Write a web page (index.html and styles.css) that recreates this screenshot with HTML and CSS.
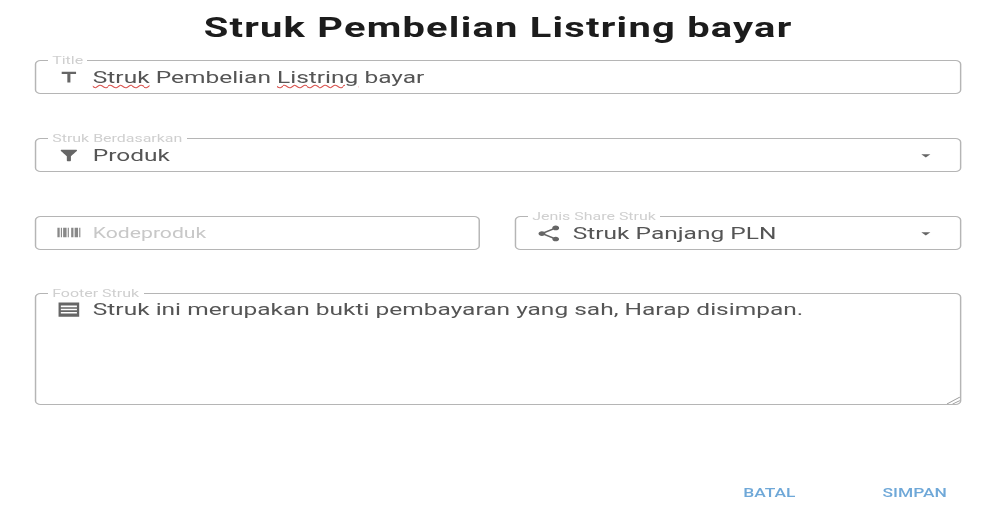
FILE: index.html
```html
<!DOCTYPE html>
<html lang="en">
<head>
  <meta charset="UTF-8" />
  <meta name="viewport" content="width=device-width, initial-scale=1.0"/>
  <title>Struk Pembelian Listring bayar</title>
  <link rel="stylesheet" href="styles.css">
</head>
<body>
  <div class="page">
    <h1 class="page-title">Struk Pembelian Listring bayar</h1>

    <fieldset class="field">
      <legend>Title</legend>
      <svg class="icon" viewBox="0 0 24 24"><path d="M5 4v3h5.5v12h3V7H19V4z"/></svg>
      <div class="value"><span class="typo">Struk</span> Pembelian <span class="typo">Listring</span> bayar</div>
    </fieldset>

    <fieldset class="field">
      <legend>Struk Berdasarkan</legend>
      <svg class="icon" viewBox="0 0 24 24"><path d="M4.25 5.61C6.27 8.2 10 13 10 13v6c0 .55.45 1 1 1h2c.55 0 1-.45 1-1v-6s3.72-4.8 5.74-7.39c.51-.66.04-1.61-.79-1.61H5.04c-.83 0-1.3.95-.79 1.61z"/></svg>
      <div class="value">Produk</div>
      <svg class="caret" viewBox="0 0 24 24"><path d="M7 10l5 5 5-5z"/></svg>
    </fieldset>

    <div class="field-row">
      <fieldset class="field plain">
        <svg class="icon wide" viewBox="0 0 24 24"><path d="M2 6h2v12H2zm3 0h1v12H5zm2 0h3v12H7zm4 0h1v12h-1zm3 0h2v12h-2zm3 0h3v12h-3zm4 0h1v12h-1z"/></svg>
        <div class="value placeholder">Kodeproduk</div>
      </fieldset>
      <fieldset class="field">
        <legend>Jenis Share Struk</legend>
        <svg class="icon wide" viewBox="0 0 24 24"><path d="M18 16.08c-.76 0-1.44.3-1.96.77L8.91 12.7c.05-.23.09-.46.09-.7s-.04-.47-.09-.7l7.05-4.11c.54.5 1.25.81 2.04.81 1.66 0 3-1.34 3-3s-1.34-3-3-3-3 1.34-3 3c0 .24.04.47.09.7L8.04 9.81C7.5 9.31 6.79 9 6 9c-1.66 0-3 1.34-3 3s1.34 3 3 3c.79 0 1.5-.31 2.04-.81l7.12 4.16c-.05.21-.08.43-.08.65 0 1.61 1.31 2.92 2.92 2.92 1.61 0 2.92-1.31 2.92-2.92s-1.31-2.92-2.92-2.92z"/></svg>
        <div class="value">Struk Panjang PLN</div>
        <svg class="caret" viewBox="0 0 24 24"><path d="M7 10l5 5 5-5z"/></svg>
      </fieldset>
    </div>

    <fieldset class="field footer-field">
      <legend>Footer Struk</legend>
      <svg class="icon wide" viewBox="0 0 24 24"><path fill-rule="evenodd" d="M3 3h18v18H3zM5 7v2h14V7zM5 11v2h14v-2zM5 15v2h14v-2z"/></svg>
      <div class="value">Struk ini merupakan bukti pembayaran yang sah, Harap disimpan.</div>
      <svg class="grip" viewBox="0 0 9 8"><path d="M0 8L9 1M4 8L9 4.500"/></svg>
    </fieldset>

    <div class="actions">
      <button class="action">Batal</button>
      <button class="action">Simpan</button>
    </div>
  </div>
</body>
</html>
```

FILE: styles.css
```css
html, body {
  margin: 0;
  padding: 0;
  background: #fff;
  overflow: hidden;
}

/* the whole dialog is stretched sideways in the screenshot */
.page {
  width: 686px;
  height: 514px;
  box-sizing: border-box;
  padding: 0 23px 0 24px;
  font-family: Roboto, "Liberation Sans", sans-serif;
  color: #555;
  transform: scaleX(1.45);
  transform-origin: 0 0;
  filter: blur(0.4px);
}

.page-title {
  margin: 0;
  padding-top: 11px;
  height: 54px;
  box-sizing: border-box;
  font-size: 27.5px;
  line-height: 34px;
  font-weight: 700;
  letter-spacing: 0.85px;
  text-align: center;
  color: #1c1c1c;
}

.field {
  display: flex;
  align-items: center;
  box-sizing: border-box;
  min-width: 0;
  height: 40px;
  margin: 0 0 38px;
  padding: 0 16px 5px 14px;
  border: 1px solid #b5b5b5;
  border-radius: 4px;
}

.field legend {
  margin-left: -6px;
  padding: 1px 3px 0;
  font-size: 11px;
  line-height: 11px;
  color: #cfcfcf;
}

.field-row {
  display: flex;
  align-items: flex-end;
  gap: 24.5px;
  margin-bottom: -1px;
}

.field-row .field {
  flex: 1;
}

.field-row .field.plain {
  flex: 0 0 306.5px;
  height: 34px;
  padding-bottom: 1px;
}

.footer-field {
  position: relative;
  align-items: flex-start;
  height: 118px;
  margin-bottom: 0;
}

.footer-field .icon {
  margin-top: 1px;
}

.icon {
  flex: none;
  width: 17px;
  height: 17px;
  margin-right: 8px;
  fill: #666;
}

.icon.wide {
  width: 19px;
  height: 19px;
  margin-left: -1px;
  margin-right: 7px;
}

.plain .icon {
  fill: #888;
}

.grip {
  position: absolute;
  right: 0;
  bottom: 0;
  width: 9px;
  height: 8px;
  fill: none;
  stroke: #999;
  stroke-width: 0.8;
}

.value {
  flex: 1;
  font-size: 16.9px;
  line-height: 20px;
  white-space: nowrap;
}

.placeholder {
  font-size: 14.6px;
  color: #c8c8c8;
}

.typo {
  text-decoration: underline wavy #d9534f 1px;
  text-underline-offset: 1px;
}

.caret {
  flex: none;
  width: 15px;
  height: 15px;
  fill: #666;
}

.actions {
  display: flex;
  justify-content: flex-end;
  gap: 60px;
  margin-top: 78px;
  padding-right: 10px;
}

.action {
  padding: 0;
  border: none;
  background: none;
  font-family: inherit;
  font-size: 12px;
  font-weight: 500;
  line-height: 20px;
  text-transform: uppercase;
  color: #6fa8d8;
}
```
